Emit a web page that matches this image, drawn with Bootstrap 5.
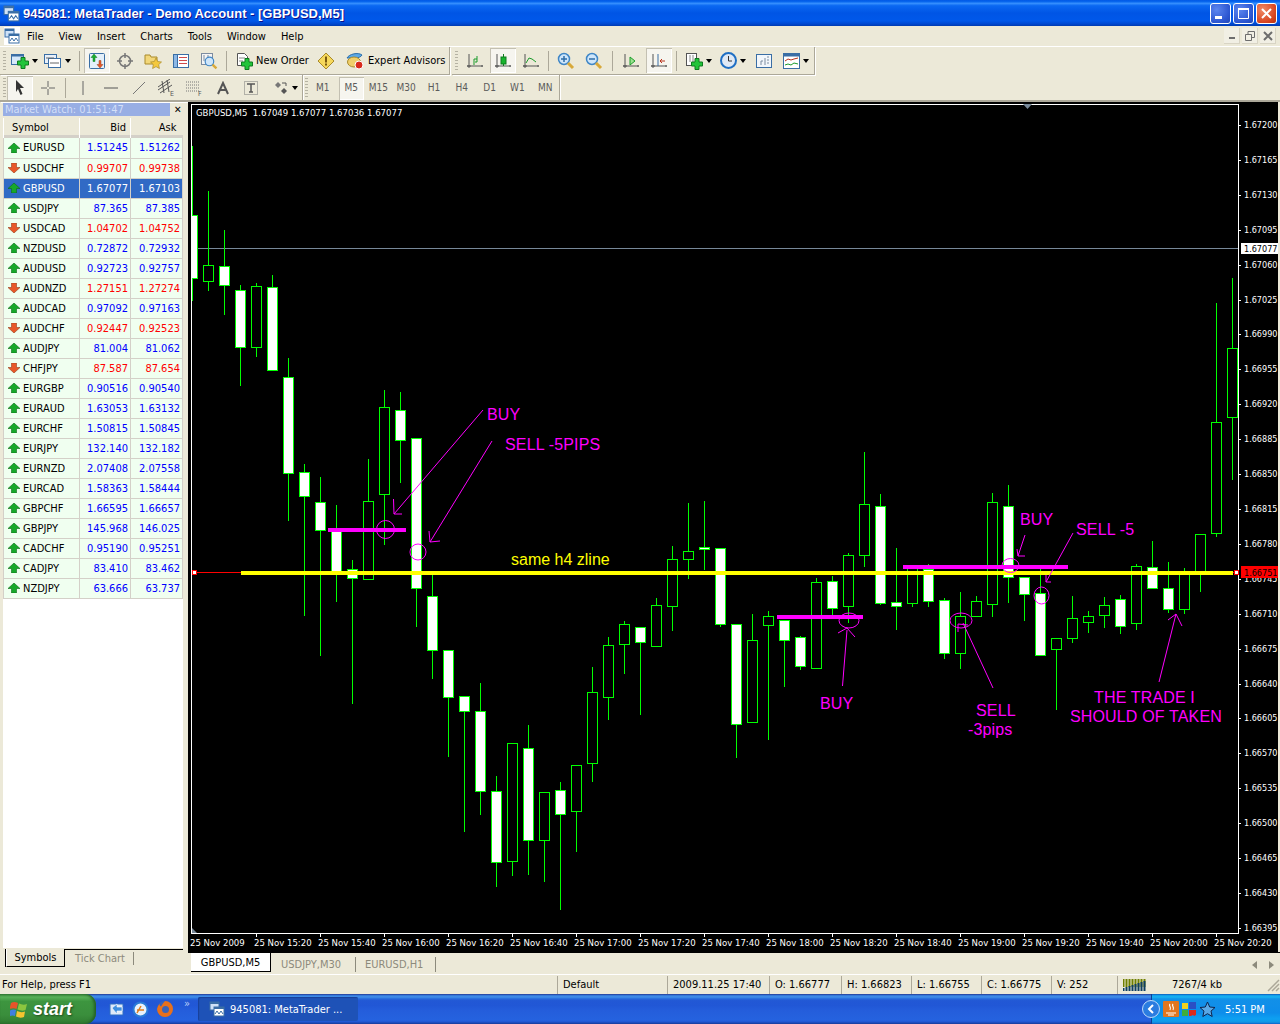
<!DOCTYPE html>
<html lang="en">
<head>
    <meta charset="UTF-8">
    <meta name="viewport" content="width=device-width, initial-scale=1">
    <title>945081: MetaTrader - Demo Account - [GBPUSD,M5]</title>
    <link href="https://cdn.jsdelivr.net/npm/bootstrap@5.3.0/dist/css/bootstrap.min.css" rel="stylesheet">
    <style>
        html, body { margin: 0; height: 100%; overflow: hidden; }
        body { width: 1280px; height: 1024px; background: #ece9d8; color: #000; font: 11px/1 "DejaVu Sans Condensed", "DejaVu Sans", sans-serif; font-stretch: condensed; }
        svg { display: block; flex: none; }

        /* title bar */
        .xp-title { height: 26px; padding: 0 3px; color: #fff; font: 700 13px/1 "Liberation Sans", Arial, sans-serif; text-shadow: 1px 1px #0f1089;
            background: linear-gradient(#0058e6 0, #0a6af0 8%, #3a93ff 12%, #0a68f2 22%, #0055e5 50%, #0058ea 80%, #0048d0 92%, #003bb0 100%); }
        .xp-title span { margin-left: 3px; }
        .win-btn { width: 21px; height: 21px; border: 1px solid #fff; border-radius: 3px; margin-left: 2px; background: radial-gradient(circle at 30% 30%, #5c86ef, #2b55d0 70%, #2347b5); }
        .win-btn.is-close { background: radial-gradient(circle at 30% 30%, #f08a66, #d8431e 70%, #b03412); }

        /* menu */
        .menu-row { height: 20px; padding-left: 4px; }
        .menu-logo { width: 16px; height: 18px; background: #fff; margin-right: 7px; }
        .menu-row a { color: #000; text-decoration: none; margin-right: 15px; }
        .mdi-btn { width: 16px; height: 16px; margin-left: 2px; background: #f1efe4; border-right: 1px solid #d8d4c4; border-bottom: 1px solid #d8d4c4; }

        /* toolbars */
        .tool-line { border-top: 1px solid #fff; }
        .tool-row { height: 29px; }
        .tool-row2 { height: 27px; }
        .tool-strip { height: 100%; border-right: 1px solid #aca899; border-bottom: 1px solid #aca899; box-shadow: 1px 1px 0 #fff; }
        .strip-a { width: 450px; margin-right: 2px; }
        .strip-b { width: 363px; }
        .strip-c { width: 303px; margin-right: 2px; }
        .strip-d { width: 255px; }
        .grip { width: 3px; height: 20px; margin: 0 1px 0 3px; background: repeating-linear-gradient(#b5b2a3 0 1px, transparent 1px 3px); }
        .grip.is-tight { margin: 0 1px 0 0; }
        .grip.is-flush { margin-right: 0; }
        .sep { width: 1px; height: 20px; background: #aca899; margin: 0 3px; }
        .sep.is-roomy { margin: 0 4px; }
        .tb { width: 28px; height: 25px; }
        .tb.is-first { margin-left: 2px; }
        .tb.wide { width: 33px; padding-left: 4px; }
        .tb.wider { width: 36px; padding-left: 4px; }
        .tb.drop { width: 35px; padding-left: 5px; }
        .tb.drop-far { padding-left: 9px; }
        .tb.on { background: #f6f5ef; box-shadow: inset 1px 1px 0 #c3c0b2, inset -1px -1px 0 #fff; margin: 0 1px; width: 26px; }
        .caret-down { width: 0; height: 0; border: 3px solid transparent; border-top: 4px solid #000; border-bottom: 0; margin-left: 3px; }
        .tb-text { height: 25px; padding-left: 6px; }
        .tb-order { width: 82px; gap: 3px; }
        .tb-expert { width: 109px; gap: 4px; }
        .period { width: 28px; height: 23px; color: #5b5b5b; font-size: 10px; }
        .period.on { width: 25px; margin: 0 1px 0 2px; background: #f6f5ef; box-shadow: inset 1px 1px 0 #c3c0b2, inset -1px -1px 0 #fff; }

        /* market watch */
        .main-area { height: 852px; border-top: 2px solid #aca899; margin-top: -2px; position: relative; }
        .mw-panel { width: 188px; padding: 1px 0 0 3px; }
        .mw-head { height: 13px; width: 167px; padding-left: 2px; background: #98aee4; color: #d3dff8; }
        .mw-close { width: 18px; font-weight: 700; font-size: 10px; padding-left: 4px; }
        .mw-box { margin-top: 2px; width: 180px; height: 830px; background: #fff; }
        .quote-table { width: 180px; table-layout: fixed; border-collapse: collapse; margin: 0; }
        .quote-table th { height: 20px; padding: 0 4px 2px 0; font-weight: 400; background: #ece9d8; box-shadow: inset 0 -3px 0 #d4d0c8; border-left: 1px solid #fff; text-align: right; }
        .quote-table th:nth-child(1) { width: 76px; text-align: left; padding-left: 8px; }
        .quote-table th:nth-child(2) { width: 51px; }
        .quote-table th:nth-child(3) { padding-right: 6px; }
        .quote-table td { height: 20px; padding: 0 2px 0 0; background: #f0fff0; border: 1px solid #d4d0c8; border-top: 0; text-align: right; color: #00f; }
        .quote-table td:first-child { text-align: left; color: #000; padding-left: 4px; }
        .quote-table tr.is-down td { color: #f00; }
        .quote-table tr.is-down td:first-child { color: #000; }
        .quote-table tr.is-sel td, .quote-table tr.is-sel td:first-child { background: #316ac5; color: #fff; }
        .sym { gap: 3px; }

        .chart-box { width: 1090px; height: 850px; background: #000; }
        .chart-box text { font-family: "DejaVu Sans Condensed", "DejaVu Sans", sans-serif; font-stretch: condensed; white-space: pre; }
        .chart-box text.t-note { font: 16px "Liberation Sans", Arial, sans-serif; letter-spacing: .15px; fill: #f0f; }
        .chart-box text.t-note.is-zone { fill: #ff0; letter-spacing: 0; }
        .t-axis { font-size: 9px; fill: #fff; }
        .t-axis.is-wide { font-size: 9.5px; }
        .t-axis.on-box { fill: #000; }

        /* tabs */
        .tab-zone { height: 22px; }
        .left-tabs { width: 188px; height: 25px; padding-left: 6px; margin-top: -3px; position: relative; }
        .left-tabs::before { content: ""; position: absolute; left: 6px; top: 0; width: 177px; height: 1px; background: #000; }
        .left-tabs .on-tab { width: 59px; height: 18px; background: #ece9d8; border: 1px solid #000; border-top: 0; border-left-color: #fff; box-shadow: -1px 0 0 #000; position: relative; }
        .left-tabs .off-tab { color: #8c8a7c; margin: 3px 0 0 10px; padding-right: 11px; border-right: 1px solid #8c8a7c; height: 13px; width: 59px; white-space: nowrap; }
        .chart-tabs { border-top: 1px solid #000; height: 22px; padding-left: 3px; }
        .chart-tabs .on-tab { width: 80px; height: 19px; background: #fff; border-right: 1px solid #000; border-bottom: 1px solid #000; }
        .chart-tabs .off-tab { color: #8c8a7c; height: 15px; border-right: 1px solid #8c8a7c; }
        .off-a { width: 85px; padding-left: 10px; }
        .off-b { width: 80px; padding-left: 9px; }
        .tab-arrows { gap: 12px; padding-right: 6px; }

        /* status bar */
        .status-row { height: 20px; border-top: 1px solid #fff; }
        .status-row > div { height: 18px; padding-left: 5px; border-right: 1px solid #aca899; }
        .status-row > div:nth-child(1) { width: 558px; padding-left: 2px; }
        .status-row > div:nth-child(2) { width: 110px; }
        .status-row > div:nth-child(3) { width: 102px; }
        .status-row > div:nth-child(4) { width: 72px; }
        .status-row > div:nth-child(5) { width: 70px; }
        .status-row > div:nth-child(6) { width: 70px; }
        .status-row > div:nth-child(7) { width: 70px; }
        .status-row > div:nth-child(8) { width: 66px; }
        .status-row > div:nth-child(9) { width: 162px; border-right: 0; gap: 25px; }

        /* windows taskbar */
        .task-bar { height: 30px; color: #fff; background: linear-gradient(#1f2f86 0, #3165c4 3%, #3682e5 6%, #4490e6 10%, #3883e5 12%, #2b71e0 15%, #2663da 18%, #235bd6 20%, #2258d5 23%, #2157d6 38%, #245ddb 54%, #2562df 86%, #245fdc 89%, #2158d4 92%, #1d4ec0 95%, #1941a5 98%); }
        .start-btn { width: 96px; height: 30px; gap: 5px; padding-left: 10px; border-radius: 0 11px 11px 0; background: linear-gradient(#3a8a3c 0, #58b158 10%, #3d953f 25%, #3a8e3c 70%, #2f7a30 100%); box-shadow: inset -2px 0 3px #235f25; }
        .start-word { font: italic 700 18px/1 "Liberation Sans", Arial, sans-serif; text-shadow: 1px 1px 2px #1c4a1c; }
        .quick-icons { width: 102px; gap: 7px; padding-left: 12px; }
        .more-mark { font-size: 11px; color: #b8d0f8; margin: -12px 0 0 3px; }
        .task-btn { width: 160px; height: 24px; gap: 5px; padding-left: 11px; background: #1e52b7; border-radius: 2px; box-shadow: inset 1px 1px 1px #18409a; }
        .tray-zone { width: 129px; height: 30px; padding-left: 11px; gap: 2px; background: linear-gradient(#0c59b9, #139ee9 5%, #18b5f2 10%, #139beb 14%, #1290e8 19%, #0d8dea 63%, #0d9ff1 81%, #0f9eed 88%, #119be9 91%, #1392e2 94%, #137ed7 97%, #095bc9); border-left: 1px solid #0b3f96; position: relative; }
        .tray-back { position: absolute; left: -10px; top: 6px; }
        .tray-time { margin-left: 7px; }
    </style>
</head>
<body class="d-flex flex-column">

    <!-- icon defs -->
    <svg width="0" height="0" class="position-absolute">
        <defs>
            <symbol id="mt-logo" viewBox="0 0 16 16">
                <rect x="1" y="1" width="9" height="8" fill="#cfe2f7" stroke="#3a6ea5"/><rect x="1" y="1" width="9" height="2" fill="#3a6ea5"/>
                <rect x="5" y="6" width="10" height="9" fill="#fff" stroke="#3a6ea5"/><rect x="5" y="6" width="10" height="2" fill="#3a6ea5"/>
                <path d="M6 13l2-3 2 3 2-3 2 3" fill="none" stroke="#3a6ea5"/>
            </symbol>
            <symbol id="q-up" viewBox="0 0 12 10"><path d="M6 0l6 5.500H8.500V10h-5V5.500H0z" fill="#17a82a" stroke="#0b6a18" stroke-width=".6"/></symbol>
            <symbol id="q-down" viewBox="0 0 12 10"><path d="M6 10L0 4.500h3.500V0h5v4.500H12z" fill="#e8582a" stroke="#96401c" stroke-width=".6"/></symbol>
            <symbol id="plus-g" viewBox="0 0 12 12"><path d="M4 .5h4v3.500h3.500v4H8v3.500H4V8H.5V4H4z" fill="#22c43a" stroke="#0e7a1e"/></symbol>
            <symbol id="axes" viewBox="0 0 18 18"><path d="M3 2v14M1 14h16" stroke="#555" fill="none"/><path d="M1 14h4M15 14h2" stroke="#555"/></symbol>
            <symbol id="mag" viewBox="0 0 18 18"><circle cx="7" cy="7" r="5.500" fill="#cfe6fa" stroke="#3f86c6" stroke-width="1.500"/><path d="M11 11l5 5" stroke="#d8a93a" stroke-width="3"/></symbol>
        </defs>
    </svg>

    <header class="xp-title d-flex align-items-center">
        <svg width="17" height="17"><use href="#mt-logo"/></svg>
        <span>945081: MetaTrader - Demo Account - [GBPUSD,M5]</span>
        <div class="ms-auto d-flex">
            <div class="win-btn d-flex align-items-end justify-content-center"><svg width="19" height="19" viewBox="0 0 19 19"><rect x="4" y="12" width="7" height="3" fill="#fff"/></svg></div>
            <div class="win-btn"><svg width="19" height="19" viewBox="0 0 19 19"><path d="M4.500 5.500h10v9h-10z" fill="none" stroke="#fff"/><path d="M4 4h11v2H4z" fill="#fff"/></svg></div>
            <div class="win-btn is-close"><svg width="19" height="19" viewBox="0 0 19 19"><path d="M5 5l9 9M14 5l-9 9" stroke="#fff" stroke-width="2"/></svg></div>
        </div>
    </header>

    <nav class="menu-row d-flex align-items-center">
        <div class="menu-logo"><svg width="16" height="18"><use href="#mt-logo"/></svg></div>
        <a href="#">File</a><a href="#">View</a><a href="#">Insert</a><a href="#">Charts</a><a href="#">Tools</a><a href="#">Window</a><a href="#">Help</a>
        <div class="ms-auto d-flex me-1">
            <div class="mdi-btn d-flex align-items-center justify-content-center"><svg width="10" height="10"><rect x="2" y="6" width="6" height="2" fill="#6d6d6d"/></svg></div>
            <div class="mdi-btn d-flex align-items-center justify-content-center"><svg width="10" height="10"><path d="M.5 3.500h6v6h-6zM3 3V.5h6.500v6H7" fill="none" stroke="#6d6d6d"/></svg></div>
            <div class="mdi-btn d-flex align-items-center justify-content-center"><svg width="10" height="10"><path d="M1 1l8 8M9 1L1 9" stroke="#6d6d6d" stroke-width="2"/></svg></div>
        </div>
    </nav>

    <!-- toolbar 1 -->
    <div class="tool-line tool-row d-flex">
        <div class="tool-strip strip-a d-flex align-items-center">
            <div class="grip"></div>
            <div class="tb wide d-flex align-items-center">
                <svg width="18" height="16" viewBox="0 0 18 16"><rect x=".5" y="1.500" width="12" height="10" fill="#d6e8fa" stroke="#3a6ea5"/><rect x=".5" y="1.500" width="12" height="2" fill="#3a6ea5"/><use href="#plus-g" x="6" y="4" width="12" height="12"/></svg>
                <div class="caret-down"></div>
            </div>
            <div class="tb wider d-flex align-items-center">
                <svg width="18" height="16" viewBox="0 0 18 16"><rect x=".5" y="1.500" width="12" height="9" fill="#e8f0fa" stroke="#3a6ea5"/><rect x="4.500" y="5.500" width="12" height="9" fill="#fff" stroke="#3a6ea5"/><path d="M6 10h9M2 5h8" stroke="#666"/></svg>
                <div class="caret-down"></div>
            </div>
            <div class="sep"></div>
            <div class="tb on d-flex align-items-center justify-content-center">
                <svg width="18" height="18" viewBox="0 0 18 18"><rect x="1.500" y="1.500" width="15" height="15" rx="1" fill="#e4effa" stroke="#3a6ea5"/><path d="M6 2l3 3.500H7v4H5v-4H3z" fill="#1dae33" stroke="#0e7a1e" stroke-width=".5"/><path d="M12 16l-3-3.500h2v-4h2v4h2z" fill="#e8582a" stroke="#96401c" stroke-width=".5"/></svg>
            </div>
            <div class="tb d-flex align-items-center justify-content-center">
                <svg width="18" height="18" viewBox="0 0 18 18"><circle cx="9" cy="9" r="5.500" fill="none" stroke="#777" stroke-width="1.500"/><path d="M9 1v5M9 12v5M1 9h5M12 9h5" stroke="#777" stroke-width="1.500"/></svg>
            </div>
            <div class="tb d-flex align-items-center justify-content-center">
                <svg width="18" height="18" viewBox="0 0 18 18"><path d="M1 3h5l1 2h6v7H1z" fill="#f2d77a" stroke="#a98a2a"/><path d="M12 6l1.700 3.500 3.800.5-2.800 2.600.7 3.900-3.400-1.900-3.400 1.900.7-3.900L6.500 10l3.800-.5z" fill="#f4c83c" stroke="#a98a2a" stroke-width=".7"/></svg>
            </div>
            <div class="tb d-flex align-items-center justify-content-center">
                <svg width="16" height="16" viewBox="0 0 16 16"><rect x=".5" y="1.500" width="15" height="13" fill="#fff" stroke="#3a6ea5"/><rect x=".5" y="1.500" width="4" height="13" fill="#8db8e6" stroke="#3a6ea5"/><path d="M6 4.500h8M6 7.500h8M6 10.500h8" stroke="#d04a4a"/></svg>
            </div>
            <div class="tb d-flex align-items-center justify-content-center">
                <svg width="18" height="18" viewBox="0 0 18 18"><rect x="1.500" y="1.500" width="11" height="11" fill="#f4f4f4" stroke="#7d8ca0"/><path d="M4 3v6M8 3v8" stroke="#7d8ca0"/><use href="#mag" x="4" y="4" width="14" height="14"/></svg>
            </div>
            <div class="sep"></div>
            <div class="tb-text tb-order d-flex align-items-center">
                <svg width="17" height="18" viewBox="0 0 17 18"><path d="M1.500 1.500h7l3 3v9h-10z" fill="#fff" stroke="#555"/><path d="M3 6h6M3 9h4" stroke="#888"/><use href="#plus-g" x="5" y="6" width="12" height="12"/></svg>
                <span>New Order</span>
            </div>
            <div class="tb d-flex align-items-center justify-content-center">
                <svg width="18" height="18" viewBox="0 0 18 18"><path d="M9 1l8 8-8 8-8-8z" fill="#f6d85c" stroke="#a98a2a"/><rect x="8" y="4.500" width="2" height="6" fill="#7a5a10"/><rect x="8" y="11.500" width="2" height="2" fill="#7a5a10"/></svg>
            </div>
            <div class="tb-text tb-expert d-flex align-items-center">
                <svg width="18" height="18" viewBox="0 0 18 18"><path d="M1 6c2-4 11-6 15-3-1 2-4 3-7 3z" fill="#5aa8e6" stroke="#2e6ea8"/><ellipse cx="8" cy="10" rx="6.500" ry="5" fill="#f0cf6a" stroke="#a98a2a"/><circle cx="13" cy="13" r="4" fill="#d92a1c" stroke="#fff"/></svg>
                <span>Expert Advisors</span>
            </div>
        </div>
        <div class="tool-strip strip-b d-flex align-items-center">
            <div class="grip"></div>
            <div class="tb is-first d-flex align-items-center justify-content-center">
                <svg width="18" height="18"><use href="#axes"/><path d="M8 13V7h3M11 4v6h-2" stroke="#1b9b2b" fill="none"/></svg>
            </div>
            <div class="tb on d-flex align-items-center justify-content-center">
                <svg width="18" height="18"><use href="#axes"/><rect x="7" y="5" width="5" height="7" fill="#17b52d" stroke="#0e7a1e"/><path d="M9.500 2v3M9.500 12v2" stroke="#0e7a1e"/></svg>
            </div>
            <div class="tb d-flex align-items-center justify-content-center">
                <svg width="18" height="18"><use href="#axes"/><path d="M4 11l3-5 3 1 4 3" stroke="#1b9b2b" fill="none"/></svg>
            </div>
            <div class="sep"></div>
            <div class="tb d-flex align-items-center justify-content-center">
                <svg width="18" height="18" viewBox="0 0 18 18"><use href="#mag"/><path d="M4 7h6M7 4v6" stroke="#2e6ea8" stroke-width="1.500"/></svg>
            </div>
            <div class="tb d-flex align-items-center justify-content-center">
                <svg width="18" height="18" viewBox="0 0 18 18"><use href="#mag"/><path d="M4 7h6" stroke="#2e6ea8" stroke-width="1.500"/></svg>
            </div>
            <div class="sep is-roomy"></div>
            <div class="tb d-flex align-items-center justify-content-center">
                <svg width="18" height="18"><use href="#axes"/><path d="M8 5l5 4-5 4z" fill="#9be28f" stroke="#1b9b2b"/></svg>
            </div>
            <div class="tb on d-flex align-items-center justify-content-center">
                <svg width="18" height="18"><use href="#axes"/><path d="M8 2v12" stroke="#3a6ea5"/><path d="M15 9H10M12 7l-2 2 2 2" stroke="#b8321c" fill="none"/></svg>
            </div>
            <div class="sep"></div>
            <div class="tb drop d-flex align-items-center">
                <svg width="18" height="18" viewBox="0 0 18 18"><rect x="1.500" y="1.500" width="10" height="12" fill="#fff" stroke="#555"/><path d="M5 3v7M8 3v9" stroke="#888"/><use href="#plus-g" x="6" y="6" width="12" height="12"/></svg>
                <div class="caret-down"></div>
            </div>
            <div class="tb drop d-flex align-items-center">
                <svg width="17" height="17" viewBox="0 0 17 17"><circle cx="8.500" cy="8.500" r="7.500" fill="#dfe9f5" stroke="#1f6fc4" stroke-width="2"/><path d="M8.500 4v5h3.500" stroke="#333" fill="none"/></svg>
                <div class="caret-down"></div>
            </div>
            <div class="tb d-flex align-items-center justify-content-center">
                <svg width="16" height="16" viewBox="0 0 16 16"><rect x=".5" y="1.500" width="15" height="13" fill="#f2f6fb" stroke="#3a6ea5"/><path d="M5 12V8h2M9 12V5M11 4h2M11 7h2M11 10h2" stroke="#7d8ca0" fill="none"/></svg>
            </div>
            <div class="tb drop d-flex align-items-center">
                <svg width="17" height="16" viewBox="0 0 17 16"><rect x=".5" y=".5" width="16" height="15" fill="#fff" stroke="#3a6ea5"/><rect x=".5" y=".5" width="16" height="3" fill="#3a6ea5"/><path d="M2 8l3-2 3 1 3-1 4-1" stroke="#b8321c" fill="none"/><path d="M2 12l3-1 3 1 3-2 4 1" stroke="#1b9b2b" fill="none"/></svg>
                <div class="caret-down"></div>
            </div>
        </div>
    </div>

    <!-- toolbar 2 -->
    <div class="tool-row2 d-flex">
        <div class="tool-strip strip-c d-flex align-items-center">
            <div class="grip is-flush"></div>
            <div class="tb on d-flex align-items-center justify-content-center">
                <svg width="12" height="18" viewBox="0 0 12 18"><path d="M2 1l8 8H6l2.500 6-2 1L4 10l-2 3z" fill="#333"/></svg>
            </div>
            <div class="tb d-flex align-items-center justify-content-center">
                <svg width="18" height="18" viewBox="0 0 18 18"><path d="M9 2v6M9 10v6M2 9h6M10 9h6" stroke="#666"/></svg>
            </div>
            <div class="sep"></div>
            <div class="tb d-flex align-items-center justify-content-center"><svg width="18" height="18"><path d="M9 2v14" stroke="#666"/></svg></div>
            <div class="tb d-flex align-items-center justify-content-center"><svg width="18" height="18"><path d="M2 9h14" stroke="#555"/></svg></div>
            <div class="tb d-flex align-items-center justify-content-center"><svg width="18" height="18"><path d="M3 15L15 3" stroke="#777"/></svg></div>
            <div class="tb d-flex align-items-center justify-content-center">
                <svg width="20" height="18" viewBox="0 0 20 18"><path d="M1 11L13 3M3 14L15 6M5 2l2 12M10 1l2 12M1 8L13 0" stroke="#555" fill="none"/><text x="13" y="17" font-size="7" fill="#555">E</text></svg>
            </div>
            <div class="tb d-flex align-items-center justify-content-center">
                <svg width="20" height="18" viewBox="0 0 20 18"><path d="M1 3h13M1 6h13M1 9h13M1 12h13" stroke="#777" stroke-dasharray="1 1"/><text x="13" y="17" font-size="7" fill="#555">F</text></svg>
            </div>
            <div class="tb d-flex align-items-center justify-content-center"><svg width="14" height="14" viewBox="0 0 14 14"><path d="M2 13L7 2l5 11M4 9h6" stroke="#555" stroke-width="2" fill="none"/></svg></div>
            <div class="tb d-flex align-items-center justify-content-center">
                <svg width="16" height="16" viewBox="0 0 16 16"><rect x="1.500" y="1.500" width="13" height="13" fill="none" stroke="#777" stroke-dasharray="1 1"/><path d="M4 4h8M8 4v8M6 12h4" stroke="#555" stroke-width="1.500"/></svg>
            </div>
            <div class="tb drop drop-far d-flex align-items-center">
                <svg width="15" height="15" viewBox="0 0 15 15"><path d="M1 4l3-3 3 3-3 3z" fill="#777"/><path d="M7 10l3-3 3 3-3 3z" fill="#555"/><path d="M8 2h4v3" stroke="#555" fill="none"/></svg>
                <div class="caret-down"></div>
            </div>
        </div>
        <div class="tool-strip strip-d d-flex align-items-center">
            <div class="grip is-tight"></div>
            <div class="period d-flex align-items-center justify-content-center">M1</div>
            <div class="period on d-flex align-items-center justify-content-center">M5</div>
            <div class="period d-flex align-items-center justify-content-center">M15</div>
            <div class="period d-flex align-items-center justify-content-center">M30</div>
            <div class="period d-flex align-items-center justify-content-center">H1</div>
            <div class="period d-flex align-items-center justify-content-center">H4</div>
            <div class="period d-flex align-items-center justify-content-center">D1</div>
            <div class="period d-flex align-items-center justify-content-center">W1</div>
            <div class="period d-flex align-items-center justify-content-center">MN</div>
        </div>
    </div>

    <main class="main-area d-flex">
        <aside class="mw-panel">
            <div class="d-flex align-items-center">
                <div class="mw-head d-flex align-items-center">Market Watch: 01:51:47</div>
                <div class="mw-close">✕</div>
            </div>
            <div class="mw-box">
                <table class="quote-table">
                    <thead><tr><th>Symbol</th><th>Bid</th><th>Ask</th></tr></thead>
                    <tbody id="quotes"></tbody>
                </table>
            </div>
        </aside>
        <div class="chart-box flex-shrink-0">
            <svg id="chart" width="1090" height="850" viewBox="188 102 1090 850"></svg>
        </div>
    </main>

    <div class="tab-zone d-flex">
        <div class="left-tabs d-flex align-items-start">
            <div class="on-tab d-flex align-items-center justify-content-center">Symbols</div>
            <div class="off-tab d-flex align-items-center">Tick Chart</div>
        </div>
        <div class="chart-tabs flex-grow-1 d-flex align-items-start">
            <div class="on-tab d-flex align-items-center justify-content-center">GBPUSD,M5</div>
            <div class="off-tab off-a d-flex align-items-center mt-1">USDJPY,M30</div>
            <div class="off-tab off-b d-flex align-items-center mt-1">EURUSD,H1</div>
            <div class="tab-arrows ms-auto d-flex align-items-center mt-1 pt-1">
                <svg width="5" height="8"><path d="M5 0v8L0 4z" fill="#8c8a7c"/></svg>
                <svg width="5" height="8"><path d="M0 0v8l5-4z" fill="#8c8a7c"/></svg>
            </div>
        </div>
    </div>

    <footer class="status-row d-flex align-items-center">
        <div class="d-flex align-items-center">For Help, press F1</div>
        <div class="d-flex align-items-center">Default</div>
        <div class="d-flex align-items-center">2009.11.25 17:40</div>
        <div class="d-flex align-items-center">O: 1.66777</div>
        <div class="d-flex align-items-center">H: 1.66823</div>
        <div class="d-flex align-items-center">L: 1.66755</div>
        <div class="d-flex align-items-center">C: 1.66775</div>
        <div class="d-flex align-items-center">V: 252</div>
        <div class="d-flex align-items-center">
            <svg width="24" height="13" viewBox="0 0 24 13"><path d="M.5 1v8M3.500 1v8M6.500 1v8M9.500 1v8M12.500 1v8M15.500 1v8M18.500 1v8M21.500 1v8" stroke="#6f7f00" stroke-width="2"/><path d="M.5 13v-3M3.500 13v-4M6.500 13V8M9.500 13V7M12.500 13V6M15.500 13V5M18.500 13V4M21.500 13V3" stroke="#0f3f63" stroke-width="2"/></svg>
            <span>7267/4 kb</span>
            <svg class="ms-auto" width="14" height="14" viewBox="0 0 14 14"><path d="M13 2L2 13M13 6l-7 7M13 10l-3 3" stroke="#aca899" stroke-width="1.500"/></svg>
        </div>
    </footer>

    <div class="task-bar d-flex align-items-center">
        <div class="start-btn d-flex align-items-center">
            <svg width="18" height="18" viewBox="0 0 18 18"><path d="M1 3q3-2 7 0l-1.500 6q-3-1.500-7 0z" fill="#e8542a"/><path d="M9 3.500q4 2 8 .5l-1.500 6q-3.500 1.500-8-.5z" fill="#8cc63f"/><path d="M0 10.500q3-1.500 6-.5L5 16q-3-1-6 .5z" fill="#3f7fe0"/><path d="M7 11q4 2 8 .5L14 17q-4 1.500-8-.5z" fill="#f4c430"/></svg>
            <span class="start-word">start</span>
        </div>
        <div class="quick-icons d-flex align-items-center">
            <svg width="17" height="17" viewBox="0 0 17 17"><path d="M2 3h13v11H2z" fill="#dfe9f8" stroke="#2e6ec4"/><path d="M4 7l5-4v3h5v4H9v3z" fill="#3f8fe0" stroke="#fff" stroke-width=".6"/></svg>
            <svg width="17" height="17" viewBox="0 0 17 17"><circle cx="8.500" cy="8.500" r="7" fill="#e8f1fb" stroke="#2a7ad8" stroke-width="2"/><path d="M5 9h7M9 5l-4 7" stroke="#e07b1a" stroke-width="1.500"/></svg>
            <svg width="18" height="18" viewBox="0 0 18 18"><circle cx="9" cy="9" r="8" fill="#3a63b8"/><path d="M9 1a8 8 0 1 1-8 8q.5-3 2.500-5 0 2 1.500 2.500Q7 3 9 1z" fill="#e8701c"/><circle cx="9.500" cy="9.500" r="3.500" fill="#3a63b8"/></svg>
            <span class="more-mark">»</span>
        </div>
        <div class="task-btn d-flex align-items-center">
            <svg width="16" height="16"><use href="#mt-logo"/></svg>
            <span>945081: MetaTrader ...</span>
        </div>
        <div class="tray-zone ms-auto d-flex align-items-center">
            <svg class="tray-back" width="18" height="18" viewBox="0 0 18 18"><circle cx="9" cy="9" r="8.500" fill="#2a7ce0" stroke="#bcd8f8"/><path d="M11 5L7 9l4 4" stroke="#fff" stroke-width="2" fill="none"/></svg>
            <svg width="16" height="16" viewBox="0 0 16 16"><rect width="16" height="16" rx="1" fill="#e2761f"/><path d="M3 12h10M5 14h6M7 3c-2 2 2 3 0 6M10 3c-2 2 2 3 0 6" stroke="#fff" stroke-width="1.200" fill="none"/></svg>
            <svg width="16" height="16" viewBox="0 0 16 16"><path d="M1 2h6v6H1z" fill="#f2d21f"/><path d="M8 1h7v7H8z" fill="#2b4fc4"/><path d="M1 9h6v6H1z" fill="#3fae3a"/><path d="M8 9h7v5l-2 1-1-1-2 1H8z" fill="#d92a1c"/></svg>
            <svg width="17" height="17" viewBox="0 0 17 17"><path d="M8.500 1l2.200 5 5.300.5-4 3.600 1.200 5.400-4.700-2.800-4.700 2.800 1.200-5.400-4-3.600 5.300-.5z" fill="#5aa8e6" stroke="#10234a"/></svg>
            <span class="tray-time">5:51 PM</span>
        </div>
    </div>

    <script>
        const quotes = [
            ['EURUSD', '1.51245', '1.51262'], ['USDCHF', '0.99707', '0.99738', 1], ['GBPUSD', '1.67077', '1.67103', 0, 1],
            ['USDJPY', '87.365', '87.385'], ['USDCAD', '1.04702', '1.04752', 1], ['NZDUSD', '0.72872', '0.72932'],
            ['AUDUSD', '0.92723', '0.92757'], ['AUDNZD', '1.27151', '1.27274', 1], ['AUDCAD', '0.97092', '0.97163'],
            ['AUDCHF', '0.92447', '0.92523', 1], ['AUDJPY', '81.004', '81.062'], ['CHFJPY', '87.587', '87.654', 1],
            ['EURGBP', '0.90516', '0.90540'], ['EURAUD', '1.63053', '1.63132'], ['EURCHF', '1.50815', '1.50845'],
            ['EURJPY', '132.140', '132.182'], ['EURNZD', '2.07408', '2.07558'], ['EURCAD', '1.58363', '1.58444'],
            ['GBPCHF', '1.66595', '1.66657'], ['GBPJPY', '145.968', '146.025'], ['CADCHF', '0.95190', '0.95251'],
            ['CADJPY', '83.410', '83.462'], ['NZDJPY', '63.666', '63.737']
        ];
        document.getElementById('quotes').innerHTML = quotes.map(q => {
            const cls = (q[3] ? 'is-down ' : '') + (q[4] ? 'is-sel' : '');
            return `<tr class="${cls}"><td><div class="sym d-flex align-items-center"><svg width="12" height="10"><use href="#${q[3] ? 'q-down' : 'q-up'}"/></svg>${q[0]}</div></td><td>${q[1]}</td><td>${q[2]}</td></tr>`;
        }).join('');

        // wick top, wick bottom, body top, body bottom, filled. first candle sits at x=192, then every 16px
        const candles = [
            [146,301,215,278,1],[191,291,265,281,0],[230,315,266,285,1],[285,386,290,347,1],[283,357,286,347,0],
            [275,370,287,370,1],[358,521,377,473,1],[464,616,472,496,1],[477,656,502,530,1],[505,602,528,571,1],
            [560,704,569,578,1],[459,579,501,579,0],[390,545,407,494,0],[392,483,410,440,1],[438,627,438,588,1],
            [575,679,596,650,1],[650,757,650,697,1],[696,832,696,711,1],[683,815,711,791,1],[776,887,791,862,1],
            [743,876,743,861,0],[725,875,748,840,1],[792,882,792,840,0],[782,910,790,814,1],[765,852,765,811,0],
            [667,782,692,763,0],[637,720,645,697,0],[621,674,624,644,0],[627,715,627,642,1],[598,647,605,646,0],
            [546,631,559,606,0],[503,579,551,559,0],[501,570,547,549,1],[548,627,548,624,1],[624,758,624,724,1],
            [614,723,640,722,0],[611,740,616,625,0],[620,687,620,640,1],[636,670,637,666,1],[578,668,582,668,0],
            [576,617,581,608,1],[553,623,555,606,0],[452,567,504,555,0],[494,605,506,603,1],[548,630,602,606,1],
            [566,607,568,603,0],[564,607,569,601,1],[598,659,600,653,1],[592,669,616,653,0],[596,617,601,616,0],
            [493,617,502,604,0],[485,603,506,577,1],[577,621,577,594,1],[569,655,593,655,1],[638,710,638,649,0],
            [596,643,618,638,0],[611,633,616,622,0],[597,628,605,615,0],[595,634,599,626,1],[564,630,566,623,0],
            [541,588,567,588,1],[562,613,588,609,1],[568,614,572,609,0],[534,592,534,573,0],[303,537,422,533,0],
            [278,480,348,417,0]
        ];

        const times = ['25 Nov 2009','25 Nov 15:20','25 Nov 15:40','25 Nov 16:00','25 Nov 16:20','25 Nov 16:40','25 Nov 17:00','25 Nov 17:20','25 Nov 17:40','25 Nov 18:00','25 Nov 18:20','25 Nov 18:40','25 Nov 19:00','25 Nov 19:20','25 Nov 19:40','25 Nov 20:00','25 Nov 20:20'];
        const G = '#00ff00', M = '#ff00ff';
        let s = '<defs><clipPath id="plot"><rect x="192" y="105" width="1046" height="828"/></clipPath></defs>';

        s += '<g shape-rendering="crispEdges">';
        s += '<path d="M197 248.500H1238" stroke="#778899"/>';
        s += '<g clip-path="url(#plot)">';
        candles.forEach((c, i) => {
            const x = 192 + i * 16;
            s += `<path d="M${x + .5} ${c[0]}V${c[1]}" stroke="${G}"/>`;
            s += `<rect x="${x - 4.5}" y="${c[2] + .5}" width="10" height="${c[3] - c[2]}" fill="${c[4] ? '#fff' : '#000'}" stroke="${G}"/>`;
        });
        s += '</g>';
        // frame and ticks
        s += '<path d="M191.500 933V104.500H1238.500V933.500H191" fill="none" stroke="#fff"/>';
        for (let i = 0; i < 24; i++) {
            const y = Math.round(125 + i * 34.91);
            s += `<path d="M1239 ${y + .5}h2" stroke="#fff"/>`;
        }
        for (let i = 1; i < 17; i++) s += `<path d="M${192 + i * 64 + .5} 934v3" stroke="#fff"/>`;
        // price lines
        s += '<path d="M192 572.500h50M1233 572.500h6" stroke="#f00"/>';
        s += `<rect x="241" y="571" width="992" height="4" fill="#ffff00"/>`;
        s += '<rect x="192.500" y="570.500" width="4" height="4" fill="#fff" stroke="#f00"/><rect x="1234.500" y="570.500" width="4" height="4" fill="#fff" stroke="#f00"/>';
        s += `<rect x="328" y="528" width="78" height="4" fill="${M}"/><rect x="777" y="615" width="86" height="4" fill="${M}"/><rect x="903" y="565" width="165" height="4" fill="${M}"/>`;
        s += '</g>';

        s += '<path d="M1023 104h9l-4.500 5z" fill="#778899"/><path d="M192 928l5 5h-5z" fill="#778899"/>';

        // drawn arrows and circles
        s += `<g fill="none" stroke="${M}">`;
        s += '<path d="M483 410L394 514M393.500 499l.5 15h8"/><path d="M492 441L430 542M429 531l1 11 10-1"/>';
        s += '<circle cx="385.500" cy="529.500" r="9"/><circle cx="418" cy="552" r="8"/>';
        s += '<ellipse cx="849" cy="620.500" rx="10" ry="7.500"/><path d="M842.500 686L847 630M838 633l9-5 8 9"/>';
        s += '<ellipse cx="1010.500" cy="565.500" rx="8.500" ry="7"/><ellipse cx="1041.500" cy="595.500" rx="7.500" ry="8.500"/><ellipse cx="961" cy="620.500" rx="11" ry="7.500"/>';
        s += '<path d="M993 688L963 623M958 632v-8l10 1"/><path d="M1025 535l-7 21M1017 549l1 7h7"/><path d="M1073 533l-27 49M1046 575v7h5"/><path d="M1159 682l17-68M1168 620l8-6 6 12"/>';
        s += '</g>';

        // annotations
        [[487,420,'BUY'],[505,450,'SELL -5PIPS'],[820,709,'BUY'],[1020,525,'BUY'],[1076,535,'SELL -5'],[976,716,'SELL'],[968,735,'-3pips'],[1094,703,'THE TRADE I'],[1070,722,'SHOULD OF TAKEN']]
            .forEach(n => { s += `<text class="t-note" x="${n[0]}" y="${n[1]}">${n[2]}</text>`; });
        s += '<text class="t-note is-zone" x="511" y="565">same h4 zline</text>';

        // axis labels
        s += '<text class="t-axis is-wide" x="196" y="116">GBPUSD,M5  1.67049 1.67077 1.67036 1.67077</text>';
        for (let i = 0; i < 24; i++) {
            const y = Math.round(125 + i * 34.91);
            s += `<text class="t-axis" x="1244" y="${y + 3}">${(1.672 - i * .00035).toFixed(5)}</text>`;
        }
        times.forEach((t, i) => { s += `<text class="t-axis is-wide" x="${190 + i * 64}" y="946">${t}</text>`; });
        s += '<g shape-rendering="crispEdges"><rect x="1241" y="243" width="39" height="11" fill="#fff"/><rect x="1241" y="566" width="39" height="12" fill="#f00"/></g>';
        s += '<text class="t-axis on-box" x="1244" y="252">1.67077</text><text class="t-axis on-box" x="1244" y="576">1.66751</text>';

        document.getElementById('chart').innerHTML = s;
    </script>

    <script src="https://cdn.jsdelivr.net/npm/bootstrap@5.3.0/dist/js/bootstrap.bundle.min.js"></script>
</body>
</html>
